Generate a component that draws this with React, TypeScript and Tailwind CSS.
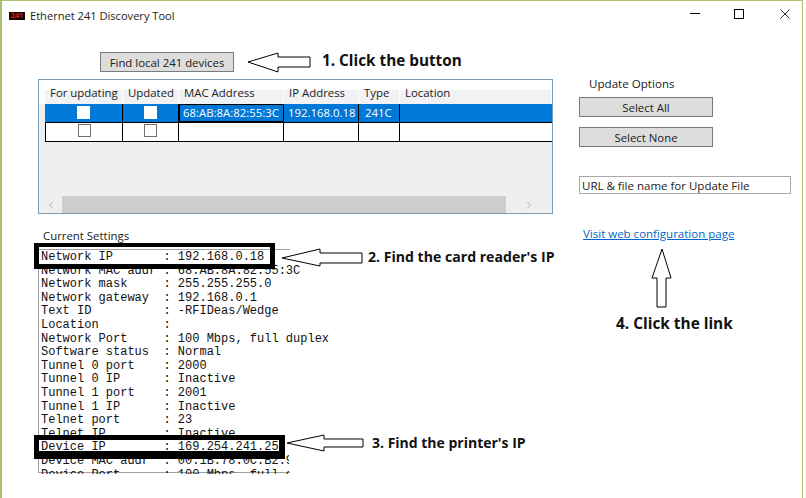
import { ChevronLeft, ChevronRight } from "lucide-react";

const settings = [
  ["Network IP", "192.168.0.18"],
  ["Network MAC addr", "68:AB:8A:82:55:3C"],
  ["Network mask", "255.255.255.0"],
  ["Network gateway", "192.168.0.1"],
  ["Text ID", "-RFIDeas/Wedge"],
  ["Location", ""],
  ["Network Port", "100 Mbps, full duplex"],
  ["Software status", "Normal"],
  ["Tunnel 0 port", "2000"],
  ["Tunnel 0 IP", "Inactive"],
  ["Tunnel 1 port", "2001"],
  ["Tunnel 1 IP", "Inactive"],
  ["Telnet port", "23"],
  ["Telnet IP", "Inactive"],
  ["Device IP", "169.254.241.25"],
];

const headers = ["For updating", "Updated", "MAC Address", "IP Address", "Type", "Location"];
const gridCols = "grid grid-cols-[78px_56px_105px_75px_41px_1fr]";

function Checkbox({ selected }: { selected?: boolean }) {
  return (
    <div
      className={`h-[13px] w-[13px] ${selected ? "bg-white" : "border border-[#707070] bg-white"}`}
    />
  );
}

function GrayButton({ label, className }: { label: string; className: string }) {
  return (
    <button
      className={`h-[20px] w-[134px] border border-[#7a7a7a] bg-[#dddddd] pt-[1px] text-center text-[11.4px] leading-[18px] text-[#222] ${className}`}
    >
      {label}
    </button>
  );
}

function Arrow({ className, points, w, h }: { className: string; points: string; w: number; h: number }) {
  return (
    <svg className={`absolute ${className}`} width={w} height={h} viewBox={`0 0 ${w} ${h}`}>
      <polygon points={points} fill="white" stroke="black" strokeWidth="1" />
    </svg>
  );
}

function Note({ className, text }: { className: string; text: string }) {
  return (
    <div className={`absolute whitespace-nowrap leading-[20px] font-bold text-[#111] ${className}`}>
      {text}
    </div>
  );
}

export default function App() {
  return (
    <div className="relative h-[498px] w-[806px] overflow-hidden bg-white font-['Open_Sans',sans-serif] text-[#222]">
      <div className="flex h-[498px] w-[803px] flex-col border-t border-r border-l-2 border-[#a6c270]">
        {/* title bar */}
        <div className="flex h-[29px] items-center">
          <div className="ml-[7px] flex h-[8px] w-[16px] items-center justify-center bg-[#1a0505] text-[7px] leading-none font-bold text-[#d0201c]">
            241
          </div>
          <div className="ml-[5px] text-[11.1px] leading-[16px]">Ethernet 241 Discovery Tool</div>
          <div className="mb-[4px] ml-auto flex items-center">
            <div className="h-px w-[10px] bg-black" />
            <div className="ml-[34px] h-[10px] w-[10px] border border-black" />
            <svg className="mr-[12px] ml-[36px]" width="10" height="10" viewBox="0 0 10 10">
              <path d="M0.5 0.5L9.5 9.5M9.5 0.5L0.5 9.5" stroke="black" strokeWidth="0.8" fill="none" />
            </svg>
          </div>
        </div>

        <div className="flex flex-1">
          {/* left side */}
          <div className="ml-[36px] w-[515px]">
            <GrayButton label="Find local 241 devices" className="mt-[22px] ml-[62px] block" />

            <div className="mt-[7px] flex h-[135px] flex-col border border-[#7c9db5] bg-[#efefef]">
              <div className="flex h-[24px]">
                <div className="w-[6px] bg-white" />
                <div className={`${gridCols} flex-1 bg-gradient-to-b from-white from-40% to-[#f1f2f4] to-40%`}>
                  {headers.map((h) => (
                    <div key={h} className="border-r border-white pt-[5px] pl-[5px] text-[11.4px] leading-[16px] whitespace-nowrap text-[#222]">
                      {h}
                    </div>
                  ))}
                </div>
              </div>
              <div className="ml-[6px] flex flex-col">
                <div className={`${gridCols} h-[19px] border-b border-black bg-[#0078d7] text-[11.4px] leading-[17px] text-white`}>
                  <div className="flex justify-center border-r border-black pt-[2px]">
                    <Checkbox selected />
                  </div>
                  <div className="flex justify-center border-r border-black pt-[2px]">
                    <Checkbox selected />
                  </div>
                  <div className="border border-black pl-[3px] leading-[16px] whitespace-nowrap">68:AB:8A:82:55:3C</div>
                  <div className="border-r border-black pl-[4px]">192.168.0.18</div>
                  <div className="border-r border-black pl-[6px]">241C</div>
                  <div />
                </div>
                <div className={`${gridCols} h-[19px] border-b border-black bg-white`}>
                  <div className="flex justify-center border-r border-l border-black pt-[1px]">
                    <Checkbox />
                  </div>
                  <div className="flex justify-center border-r border-black pt-[1px]">
                    <Checkbox />
                  </div>
                  <div className="border-r border-black" />
                  <div className="border-r border-black" />
                  <div className="border-r border-black" />
                  <div />
                </div>
              </div>
              {/* scrollbar */}
              <div className="mt-auto flex h-[17px] items-center">
                <div className="flex w-[23px] justify-center">
                  <ChevronLeft size={12} strokeWidth={1.5} className="text-[#9a9a9a]" />
                </div>
                <div className="h-full w-[444px] bg-[#cdcdcd]" />
                <div className="flex flex-1 justify-center">
                  <ChevronRight size={12} strokeWidth={1.5} className="text-[#9a9a9a]" />
                </div>
              </div>
            </div>

            <div className="mt-[14px] ml-[5px] text-[11.4px] leading-[16px]">Current Settings</div>

            <div className="mt-[5px] h-[224px] w-[252px] border-t border-b border-l border-[#a0a0a0] pt-[1px] pl-[2px] font-['Liberation_Mono',monospace] text-[12px] leading-[13.6px] whitespace-pre text-[#111]">
              {settings.map(([k, v]) => (
                <div key={k} className="h-[13.6px]">
                  {k.padEnd(17, " ")}: {v}
                </div>
              ))}
              <div className="h-[13.6px] w-[248px] overflow-hidden">{"Device MAC addr  : 00:1B:78:0C:B2:9F"}</div>
              <div className="h-[5px] w-[248px] overflow-hidden">{"Device Port      : 100 Mbps, full duplex"}</div>
            </div>
          </div>

          {/* right side */}
          <div className="ml-[26px] flex w-[212px] flex-col">
            <div className="mt-[46px] ml-[10px] text-[11.6px] leading-[16px]">Update Options</div>
            <GrayButton label="Select All" className="mt-[5px]" />
            <GrayButton label="Select None" className="mt-[10px]" />
            <input
              readOnly
              value="URL & file name for Update File"
              className="mt-[29px] h-[18px] w-[212px] border border-[#aaaaaa] bg-white px-[2px] text-[11.5px] leading-[16px] text-[#222] outline-none"
            />
            <a className="mt-[32px] ml-[4px] text-[11.5px] leading-[16px] text-[#0066cc] underline" href="#">
              Visit web configuration page
            </a>
          </div>
        </div>
      </div>

      {/* annotations */}
      <div className="absolute top-[243px] left-[34px] h-[26px] w-[241px] border-x-[5px] border-t-[4px] border-b-[5px] border-black" />
      <div className="absolute top-[435px] left-[34px] h-[24px] w-[251px] border-t-[5px] border-r-[6px] border-b-[8px] border-l-[5px] border-black" />

      <Arrow className="top-[52px] left-[247px]" w={65} h={21} points="1,10 31,1 31,5 63,5 63,15 31,15 31,20" />
      <Arrow className="top-[248px] left-[281px]" w={83} h={19} points="1,10 39,1 39,5 81,5 81,15 39,15 39,18" />
      <Arrow className="top-[434px] left-[286px]" w={79} h={19} points="1,9 38,1 38,5 77,5 77,13 38,13 38,17" />
      <Arrow className="top-[248px] left-[651px]" w={22} h={60} points="11,1 20,30 15,30 15,59 6,59 6,30 1,30" />

      <Note className="top-[50px] left-[322px] text-[15.3px]" text="1. Click the button" />
      <Note className="top-[247px] left-[368px] text-[14.1px]" text="2. Find the card reader's IP" />
      <Note className="top-[433px] left-[372px] text-[14px]" text="3. Find the printer's IP" />
      <Note className="top-[314px] left-[616px] text-[15.4px]" text="4. Click the link" />
    </div>
  );
}
